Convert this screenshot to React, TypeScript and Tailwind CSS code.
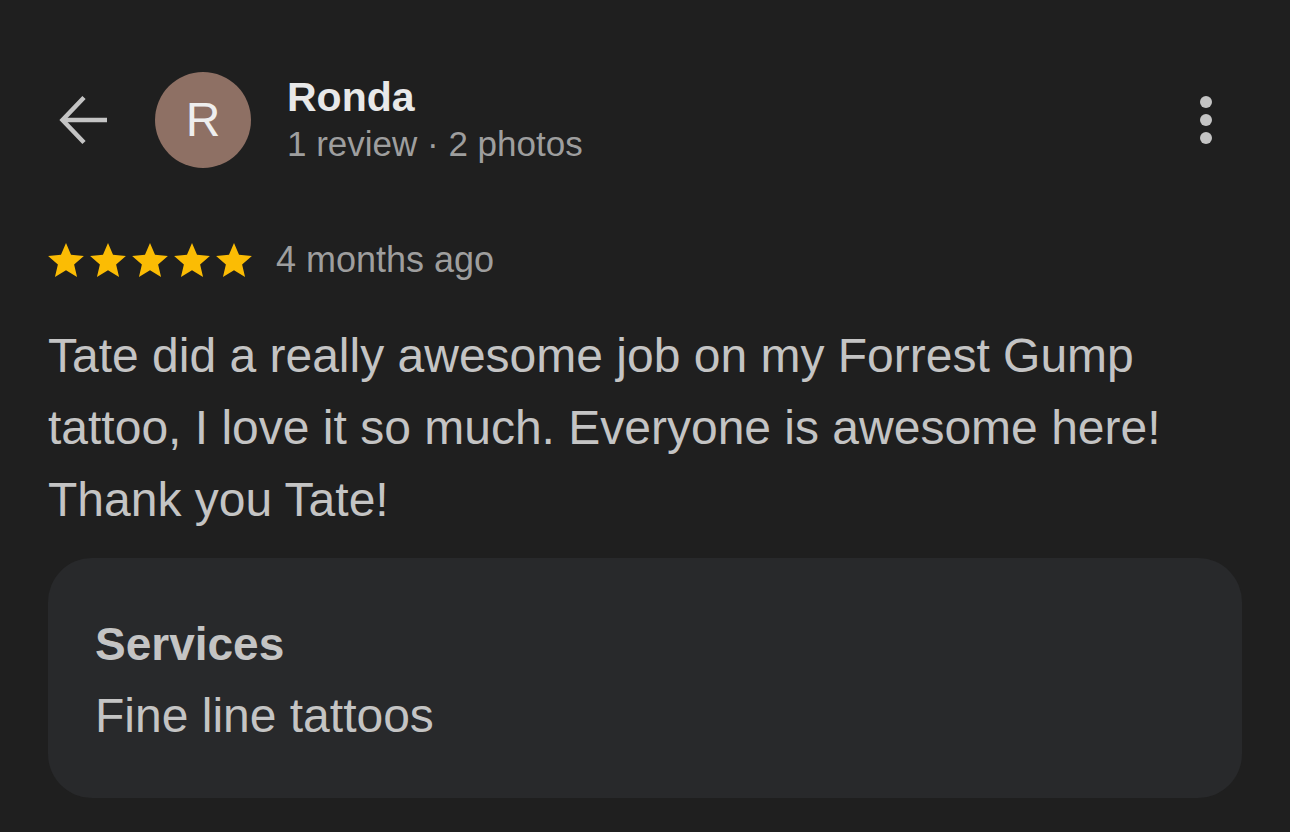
const stars = [0, 1, 2, 3, 4];

function BackArrow() {
  return (
    <svg className="h-12 w-12 overflow-visible" viewBox="0 0 48 48" fill="none" stroke="#c4c4c4" strokeWidth={4.5}>
      <path d="M24 1.5 L2.5 24 L24 46.5" strokeLinejoin="miter" />
      <path d="M3 24 H47" />
    </svg>
  );
}

function Star() {
  return (
    <svg className="h-[34px] w-9" viewBox="2 2 20 19" fill="#fbbc04">
      <path d="M12 17.27L18.18 21l-1.64-7.03L22 9.24l-7.19-.61L12 2 9.19 8.63 2 9.24l5.46 4.73L5.82 21z" />
    </svg>
  );
}

export default function App() {
  return (
    <div
      className="min-h-screen w-full bg-[#1f1f1f] px-12 pt-[72px]"
      style={{ fontFamily: '"Liberation Sans", Arial, sans-serif' }}
    >
      {/* header */}
      <div className="flex h-24 items-center">
        <button className="ml-3">
          <BackArrow />
        </button>
        <div className="ml-[47px] flex h-24 w-24 items-center justify-center rounded-full bg-[#8e7064]">
          <span className="text-[48px] leading-none text-[#eeeeee]">R</span>
        </div>
        <div className="ml-9 flex flex-1 flex-col">
          <span className="text-[41px] font-bold leading-[44px] text-[#e8e8e8]">Ronda</span>
          <span className="mt-[3px] text-[35px] leading-[44px] text-[#9e9e9e]">1 review · 2 photos</span>
        </div>
        <button className="mr-3 flex h-12 w-12 flex-col items-center justify-center gap-[6px]">
          <span className="h-3 w-3 rounded-full bg-[#c4c4c4]" />
          <span className="h-3 w-3 rounded-full bg-[#c4c4c4]" />
          <span className="h-3 w-3 rounded-full bg-[#c4c4c4]" />
        </button>
      </div>

      {/* rating */}
      <div className="mt-[72px] flex h-10 items-center">
        <div className="flex gap-[6px]">
          {stars.map((i) => (
            <Star key={i} />
          ))}
        </div>
        <span className="ml-6 text-[36px] leading-10 text-[#9e9e9e]">4 months ago</span>
      </div>

      {/* review */}
      <p className="mt-10 text-[48px] leading-[72px] text-[#c4c4c4]">
        Tate did a really awesome job on my Forrest Gump tattoo, I love it so much. Everyone is awesome here! Thank you Tate!
      </p>

      {/* services */}
      <div className="mt-[22px] rounded-[44px] bg-[#28292b] pb-[46px] pl-[47px] pt-[50px]">
        <div className="text-[46px] font-bold leading-[72px] text-[#c4c4c4]">Services</div>
        <div className="text-[48px] leading-[72px] text-[#c4c4c4]">Fine line tattoos</div>
      </div>
    </div>
  );
}
